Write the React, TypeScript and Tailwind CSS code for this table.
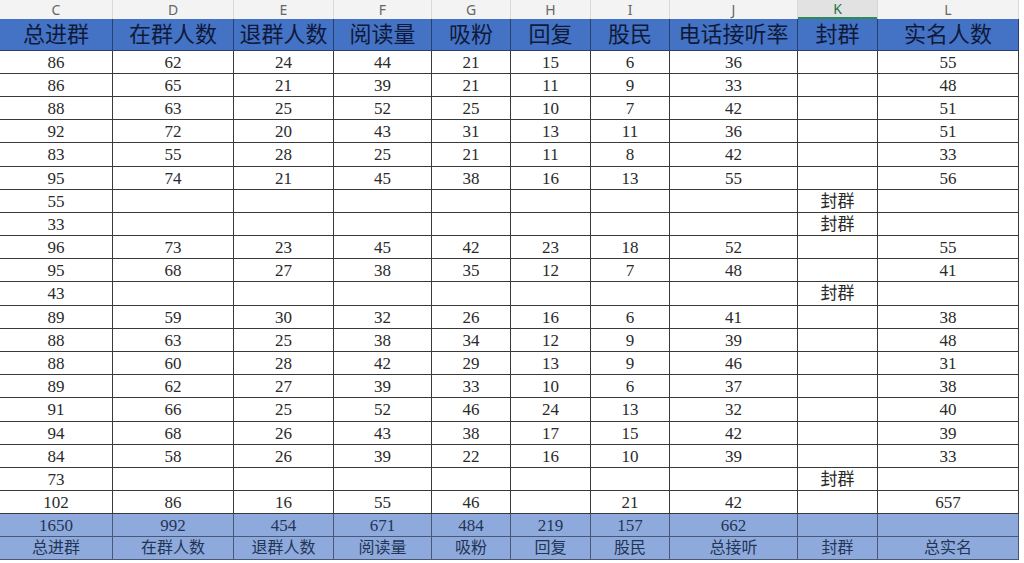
import React from "react";

const cols = ["C", "D", "E", "F", "G", "H", "I", "J", "K", "L"];
const heads = ["总进群", "在群人数", "退群人数", "阅读量", "吸粉", "回复", "股民", "电话接听率", "封群", "实名人数"];
const labels = ["总进群", "在群人数", "退群人数", "阅读量", "吸粉", "回复", "股民", "总接听", "封群", "总实名"];
const totals = ["1650", "992", "454", "671", "484", "219", "157", "662", "", ""];

const F = "封群";
const closed = (n: number) => [String(n), "", "", "", "", "", "", "", F, ""];

const rows: (string | number)[][] = [
  [86, 62, 24, 44, 21, 15, 6, 36, "", 55],
  [86, 65, 21, 39, 21, 11, 9, 33, "", 48],
  [88, 63, 25, 52, 25, 10, 7, 42, "", 51],
  [92, 72, 20, 43, 31, 13, 11, 36, "", 51],
  [83, 55, 28, 25, 21, 11, 8, 42, "", 33],
  [95, 74, 21, 45, 38, 16, 13, 55, "", 56],
  closed(55),
  closed(33),
  [96, 73, 23, 45, 42, 23, 18, 52, "", 55],
  [95, 68, 27, 38, 35, 12, 7, 48, "", 41],
  closed(43),
  [89, 59, 30, 32, 26, 16, 6, 41, "", 38],
  [88, 63, 25, 38, 34, 12, 9, 39, "", 48],
  [88, 60, 28, 42, 29, 13, 9, 46, "", 31],
  [89, 62, 27, 39, 33, 10, 6, 37, "", 38],
  [91, 66, 25, 52, 46, 24, 13, 32, "", 40],
  [94, 68, 26, 43, 38, 17, 15, 42, "", 39],
  [84, 58, 26, 39, 22, 16, 10, 39, "", 33],
  closed(73),
  [102, 86, 16, 55, 46, "", 21, 42, "", 657],
];

// a few rows are a pixel taller, like the scaled sheet
const tall = [4, 10, 15];

const grid = "grid grid-cols-[113px_121px_100px_98px_79px_80px_79px_128px_80px_141px]";
const serif = "font-['Liberation_Serif','Noto_Sans_CJK_SC',serif]";

export default function App() {
  return (
    <div className="h-[563px] w-[1024px] overflow-hidden bg-white">
      <div className={grid}>
        {cols.map((c) =>
          c === "K" ? (
            <div
              key={c}
              className="flex h-[19px] items-center justify-center border-r border-[#d4d4d4] bg-[#e2e2e2] pb-[1px] font-['Noto_Sans',sans-serif] text-[14px] leading-none text-[#1e7145] shadow-[inset_0_-2px_0_#2e8b57]"
            >
              {c}
            </div>
          ) : (
            <div
              key={c}
              className="flex h-[19px] items-center justify-center border-r border-[#d9d9d9] bg-[#f3f3f3] font-['Noto_Sans',sans-serif] text-[14px] leading-none text-[#666]"
            >
              {c}
            </div>
          ),
        )}
      </div>

      <div className={`${grid} ${serif}`}>
        {heads.map((h, i) => (
          <div
            key={"h" + i}
            className="flex h-[32px] items-center justify-center border-r border-b border-[#2b3f6e] bg-[#4472c4]"
          >
            <span className="text-[22px] leading-none text-[#0f1a3a]">{h}</span>
          </div>
        ))}

        {rows.map((r, ri) =>
          r.map((v, ci) => (
            <div
              key={ri + "-" + ci}
              className={
                "flex items-center justify-center border-r border-b border-[#3a3a3a] text-[17px] leading-none text-[#2a2a2a] " +
                (tall.includes(ri) ? "h-[24px]" : "h-[23px]")
              }
            >
              {v}
            </div>
          )),
        )}

        {totals.map((v, i) => (
          <div
            key={"t" + i}
            className="flex h-[23px] items-center justify-center border-r border-b border-[#4a5878] bg-[#8eaadc] text-[17px] leading-none text-[#243456]"
          >
            {v}
          </div>
        ))}

        {labels.map((v, i) => (
          <div
            key={"l" + i}
            className="flex h-[23px] items-center justify-center border-r border-b border-[#4a5878] bg-[#8eaadc] text-[16px] leading-none text-[#243456]"
          >
            {v}
          </div>
        ))}
      </div>
    </div>
  );
}
